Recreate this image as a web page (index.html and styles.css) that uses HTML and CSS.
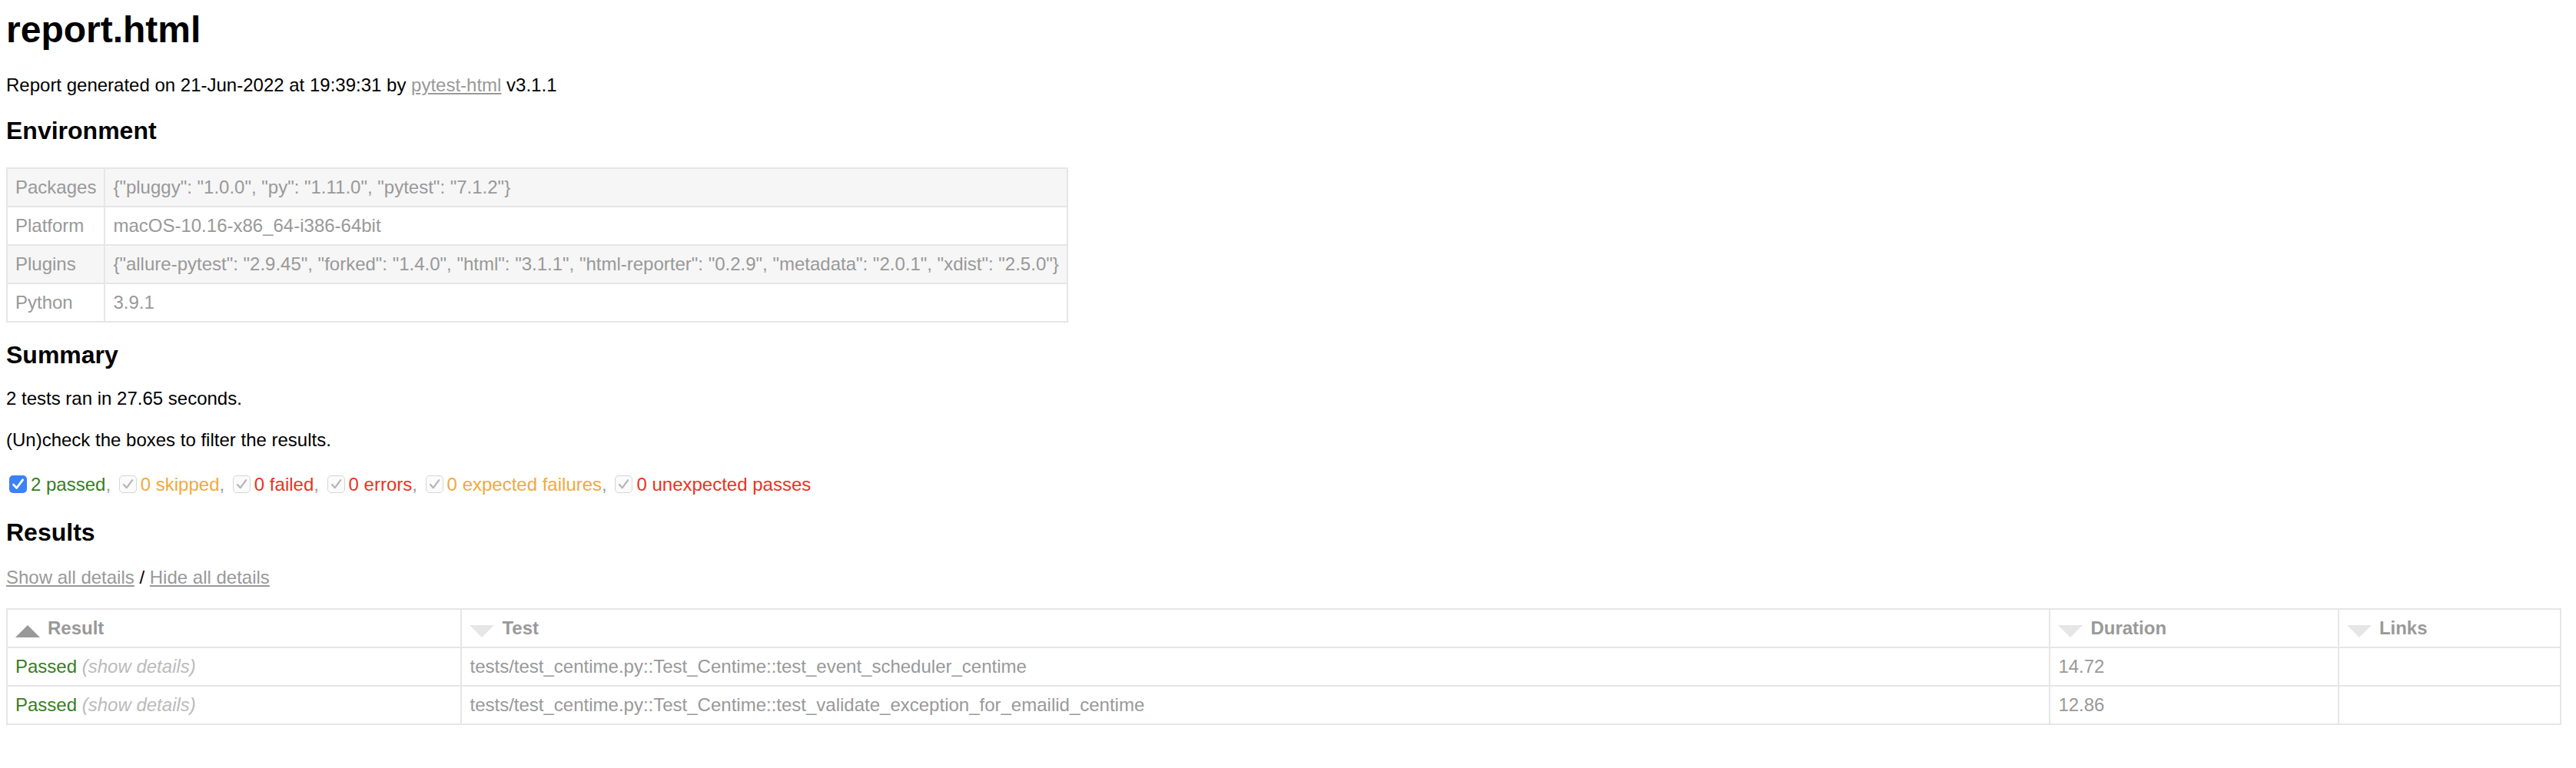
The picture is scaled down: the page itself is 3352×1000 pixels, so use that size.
FILE: index.html
```html
<!DOCTYPE html>
<html>
<head>
<meta charset="utf-8">
<title>report.html</title>
<link rel="stylesheet" href="styles.css">
</head>
<body>
<h1 class="title">report.html</h1>
<p class="text gen">Report generated on 21-Jun-2022 at 19:39:31 by <a class="link" href="#">pytest-html</a> v3.1.1</p>
<h2 class="heading env-head">Environment</h2>
<table class="env">
  <tr class="odd"><td>Packages</td><td>{"pluggy": "1.0.0", "py": "1.11.0", "pytest": "7.1.2"}</td></tr>
  <tr><td>Platform</td><td>macOS-10.16-x86_64-i386-64bit</td></tr>
  <tr class="odd"><td>Plugins</td><td>{"allure-pytest": "2.9.45", "forked": "1.4.0", "html": "3.1.1", "html-reporter": "0.2.9", "metadata": "2.0.1", "xdist": "2.5.0"}</td></tr>
  <tr><td>Python</td><td>3.9.1</td></tr>
</table>
<h2 class="heading sum-head">Summary</h2>
<p class="text ran">2 tests ran in 27.65 seconds. </p>
<p class="text hint">(Un)check the boxes to filter the results.</p>
<div class="filters"><span class="cb cb-on"><svg viewBox="0 0 23 23" width="23" height="23"><path d="M5.5 12 L9.6 16.4 L17.6 5.8" fill="none" stroke="#fff" stroke-width="2.8" stroke-linecap="round" stroke-linejoin="round"/></svg></span><span class="passed">2 passed</span>, <span class="cb cb-off"><svg viewBox="0 0 23 23" width="23" height="23"><path d="M6 12 L9.8 16.2 L17.2 6.2" fill="none" stroke="#b5b5b5" stroke-width="2.2" stroke-linecap="round" stroke-linejoin="round"/></svg></span><span class="skipped">0 skipped</span>, <span class="cb cb-off"><svg viewBox="0 0 23 23" width="23" height="23"><path d="M6 12 L9.8 16.2 L17.2 6.2" fill="none" stroke="#b5b5b5" stroke-width="2.2" stroke-linecap="round" stroke-linejoin="round"/></svg></span><span class="failed">0 failed</span>, <span class="cb cb-off"><svg viewBox="0 0 23 23" width="23" height="23"><path d="M6 12 L9.8 16.2 L17.2 6.2" fill="none" stroke="#b5b5b5" stroke-width="2.2" stroke-linecap="round" stroke-linejoin="round"/></svg></span><span class="failed">0 errors</span>, <span class="cb cb-off"><svg viewBox="0 0 23 23" width="23" height="23"><path d="M6 12 L9.8 16.2 L17.2 6.2" fill="none" stroke="#b5b5b5" stroke-width="2.2" stroke-linecap="round" stroke-linejoin="round"/></svg></span><span class="skipped">0 expected failures</span>, <span class="cb cb-off"><svg viewBox="0 0 23 23" width="23" height="23"><path d="M6 12 L9.8 16.2 L17.2 6.2" fill="none" stroke="#b5b5b5" stroke-width="2.2" stroke-linecap="round" stroke-linejoin="round"/></svg></span><span class="failed">0 unexpected passes</span></div>
<h2 class="heading res-head">Results</h2>
<p class="text show"><a class="link" href="#">Show all details</a> / <a class="link" href="#">Hide all details</a></p>
<table class="results">
  <colgroup>
    <col class="c-result"><col class="c-test"><col class="c-dur"><col class="c-links">
  </colgroup>
  <thead>
    <tr>
      <th><span class="sort-icon asc"></span>Result</th>
      <th><span class="sort-icon inactive"></span>Test</th>
      <th><span class="sort-icon inactive"></span>Duration</th>
      <th><span class="sort-icon inactive"></span>Links</th>
    </tr>
  </thead>
  <tbody>
    <tr>
      <td><span class="passed">Passed</span> <span class="expander">(show details)</span></td>
      <td>tests/test_centime.py::Test_Centime::test_event_scheduler_centime</td>
      <td>14.72</td>
      <td></td>
    </tr>
    <tr>
      <td><span class="passed">Passed</span> <span class="expander">(show details)</span></td>
      <td>tests/test_centime.py::Test_Centime::test_validate_exception_for_emailid_centime</td>
      <td>12.86</td>
      <td></td>
    </tr>
  </tbody>
</table>
</body>
</html>
```

FILE: styles.css
```css
html {
  background: #fff;
}
body {
  margin: 0 19px 0 8px;
  font-family: "Liberation Sans", Arial, Helvetica, sans-serif;
  font-size: 24px;
  line-height: 28px;
  color: #999;
}
.title {
  font-size: 48px;
  line-height: 55px;
  font-weight: bold;
  color: #000;
  margin: 11px 0 0;
}
.heading {
  font-size: 32px;
  line-height: 37px;
  font-weight: bold;
  color: #000;
  margin: 0;
}
.text {
  color: #000;
  margin: 0;
}
.link {
  color: #999;
  text-decoration: underline;
}
.gen { margin-top: 31px; }
.env-head { margin-top: 27px; }
.env {
  border-collapse: collapse;
  margin-top: 29px;
}
.env td {
  padding: 10px;
  border: 2px solid #e6e6e6;
  color: #999;
  white-space: nowrap;
}
.env tr.odd {
  background: #f6f6f6;
}
.sum-head { margin-top: 24px; }
.ran { margin-top: 24px; }
.hint { margin-top: 26px; }
.filters {
  margin-top: 24px;
  height: 40px;
  line-height: 40px;
  white-space: nowrap;
}
.cb {
  display: inline-block;
  width: 23px;
  height: 23px;
  box-sizing: border-box;
  border-radius: 5px;
  margin: 0 5px 0 4px;
  vertical-align: middle;
  position: relative;
  top: -2px;
}
.cb svg {
  display: block;
}
.cb-on {
  background: #3a82f6;
}
.cb-off {
  background: #fbfbfb;
  border: 1px solid #d6d6d6;
}
.cb-off svg {
  margin: -1px;
}
.passed { color: #367e22; }
.skipped { color: #f2a93b; }
.failed { color: #ea3323; }
.res-head { margin-top: 24px; }
.show { margin-top: 26px; }
.results {
  margin-top: 26px;
  width: 100%;
  border-collapse: collapse;
  table-layout: fixed;
  border: 2px solid #e6e6e6;
  color: #999;
}
.c-result { width: 17.8%; }
.c-test { width: 62.2%; }
.c-dur { width: 11.3%; }
.c-links { width: 8.7%; }
.results th,
.results td {
  padding: 10px;
  border: 2px solid #e6e6e6;
  text-align: left;
  white-space: nowrap;
}
.results th {
  font-weight: bold;
}
.sort-icon {
  float: left;
  width: 0;
  height: 0;
  margin-top: 10px;
  margin-right: 10px;
  border-left: 16px solid transparent;
  border-right: 16px solid transparent;
}
.sort-icon.asc {
  border-bottom: 16px solid #999;
}
.sort-icon.inactive {
  border-top: 16px solid #e6e6e6;
}
.expander {
  color: #bbb;
  font-style: italic;
}
```
